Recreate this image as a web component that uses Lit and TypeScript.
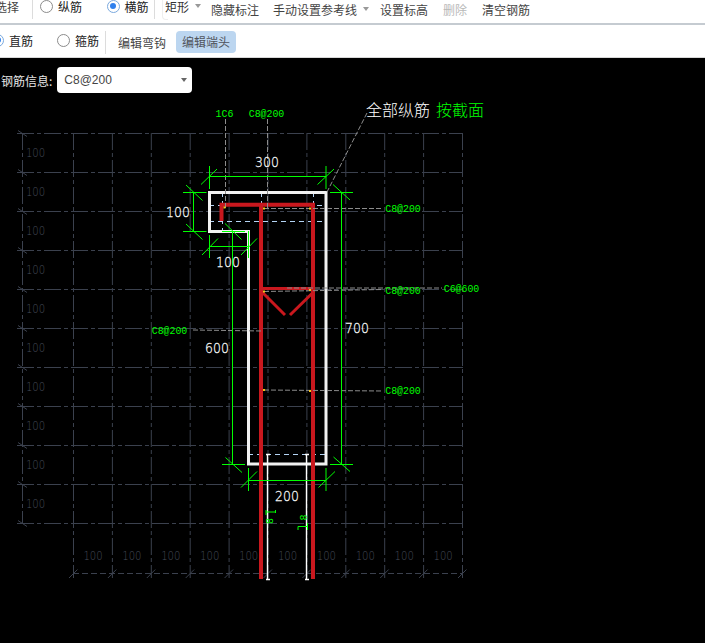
import { LitElement, html, css, svg } from 'lit';
import { customElement } from 'lit/decorators.js';

type Seg = [number, number, number, number];
type Label = [string, number, number];

const GRID_X = Array.from({ length: 11 }, (_, i) => 73.5 + i * 38.9);
const GRID_Y = Array.from({ length: 11 }, (_, i) => 133.5 + i * 39);

// green dimension lines, extension ticks and slashes
const DIM_LINES: Seg[] = [
  [209.5, 176.5, 326, 176.5], [209.5, 166, 209.5, 189], [326, 166, 326, 189],
  [201, 184.5, 217, 169], [317.5, 184.5, 334, 169],
  [193.5, 192.5, 193.5, 231], [183, 192.5, 206.5, 192.5], [183, 231.5, 206.5, 231.5],
  [186, 185, 202.5, 200.5], [186, 224, 202.5, 239.5],
  [209.5, 246.5, 248.5, 246.5], [209.5, 235, 209.5, 258], [248.5, 231, 248.5, 258],
  [202, 255, 218, 238.5], [241, 255, 257, 238.5],
  [232.5, 231.5, 232.5, 464], [222, 231.5, 245, 231.5], [222, 464.5, 245, 464.5],
  [225, 223.5, 241.5, 239.5], [225.5, 457.5, 242, 472.5],
  [341.5, 192.5, 341.5, 464], [330, 192.5, 353, 192.5], [330, 464.5, 353, 464.5],
  [333, 184.5, 350, 200], [333.5, 457, 350, 471.5],
  [248.5, 480.5, 326, 480.5], [248.5, 468, 248.5, 491], [326, 468, 326, 491],
  [241, 487.5, 257, 471.5], [318.5, 487.5, 335, 471.5],
];

const LEADERS: Seg[] = [
  [367, 113, 327, 192], [225.5, 119, 225.5, 208], [267.5, 119, 267.5, 209],
  [264, 208.5, 383, 208.5], [264, 291.5, 383, 289.5], [287, 288, 442, 288],
  [264, 390, 383, 391], [193, 330, 262, 331],
];

const HINTS: Seg[] = [
  [209, 205.5, 326, 205.5], [209, 221.5, 326, 221.5], [222.5, 192, 222.5, 231],
  [261.5, 192, 261.5, 205], [313.5, 192, 313.5, 205], [248, 454.5, 326, 454.5],
];

const DOTS = [[224.5, 207.5], [264, 208.5], [310, 208.5], [264, 291.5], [310, 290], [264, 390], [310, 391]];

const GREEN_LABELS: Label[] = [
  ['1C6', 224.5, 114], ['C8@200', 266.5, 114], ['C8@200', 403, 208.5], ['C8@200', 403, 290.5],
  ['C6@600', 461.5, 288.5], ['C8@200', 169.5, 330.5], ['C8@200', 403, 391],
];

const WHITE_LABELS: Label[] = [
  ['300', 267, 162], ['100', 178, 211.5], ['100', 228, 262], ['600', 217, 348], ['700', 357, 328], ['200', 287, 496],
];

@customElement('app-root')
export class AppRoot extends LitElement {
  static styles = css`
    :host {
      display: block;
      position: relative;
      width: 705px;
      height: 643px;
      overflow: hidden;
      background: #000;
      font-family: "Noto Sans CJK SC", "Liberation Sans", sans-serif;
      font-size: 12px;
      color: #333;
    }
    .bar {
      display: flex;
      align-items: center;
      background: #fff;
      white-space: nowrap;
    }
    .top {
      height: 23px;
      margin-left: -5px;
      padding-bottom: 5px;
      box-sizing: border-box;
    }
    .sub {
      height: 32px;
      margin-left: -9px;
      border-top: 2px solid #c5cbd1;
      border-bottom: 1px solid #d8d8d8;
    }
    .lifted { position: relative; top: -3px; }
    .sep { width: 1px; align-self: flex-start; height: 19px; background: #dcdcdc; }
    .sub .sep { align-self: center; height: 23px; margin-top: 2px; }
    .radio { display: flex; align-items: center; gap: 5px; color: #222; flex: none; }
    .sub .radio { position: relative; top: -1px; }
    .dot {
      width: 13px;
      height: 13px;
      border: 1px solid #8c8c8c;
      border-radius: 50%;
      box-sizing: border-box;
      background: #fff;
      position: relative;
    }
    .dot.on { border-color: #7aa9de; }
    .dot.on::after {
      content: "";
      position: absolute;
      inset: 2.5px;
      border-radius: 50%;
      background: #2f80ed;
    }
    .btn { color: #444; flex: none; }
    .sub .btn { margin-top: 3px; }
    .btn.off { color: #b9b9b9; }
    .caret {
      width: 0;
      height: 0;
      margin-left: 6px;
      border: 3px solid transparent;
      border-top: 4px solid #999;
      border-bottom: 0;
    }
    .pick { display: flex; align-items: center; flex: none; }
    .shape::before {
      content: "";
      position: absolute;
      left: -3px;
      top: -5px;
      bottom: -5px;
      width: 5px;
      border-left: 1px solid #eee;
      border-bottom: 1px solid #eee;
      border-radius: 0 0 0 4px;
    }
    .active {
      background: #bcd6f0;
      color: #50545c;
      border-radius: 4px;
      padding: 3px 6px;
      line-height: 16px;
      margin-top: 2px;
    }
    .form {
      display: flex;
      align-items: center;
      gap: 5px;
      height: 26px;
      margin-top: 9px;
      margin-left: 1px;
      color: #e6e6e6;
    }
    .select {
      display: flex;
      align-items: center;
      justify-content: space-between;
      box-sizing: border-box;
      width: 135px;
      height: 26px;
      padding: 0 5px 0 7px;
      background: #fff;
      border-radius: 4px;
      color: #444;
      font-family: "Liberation Sans", sans-serif;
      font-size: 12px;
    }
    .select .caret { border-top-color: #666; }
    .stage { position: absolute; left: 0; top: 0; pointer-events: none; }
    .stage text { text-anchor: middle; dominant-baseline: central; font-family: "Liberation Mono", monospace; }
    .stage .thin text { font-family: "DejaVu Sans", sans-serif; font-weight: 200; }
    .stage .bright text { stroke: #fff; stroke-width: 0.25px; }
    .stage .note { text-anchor: start; font-family: "Noto Sans CJK SC", sans-serif; font-size: 16px; font-weight: 300; }
  `;

  private line(s: Seg) {
    return svg`<line x1=${s[0]} y1=${s[1]} x2=${s[2]} y2=${s[3]}></line>`;
  }

  // CAD font is tall and narrow, so the text gets squeezed sideways
  private cadText(text: string, x: number, y: number, squeeze: number) {
    return svg`<text transform="translate(${x} ${y}) scale(${squeeze} 1)">${text}</text>`;
  }

  private drawGrid() {
    const ticks: Seg[] = [
      ...GRID_Y.map((y): Seg => [18, y - 3, 27, y + 3]),
      ...GRID_X.map((x): Seg => [x - 4.5, 578, x + 4, 569.5]),
    ];
    return svg`
      <g stroke="#3b414e" stroke-width="1" fill="none" stroke-dasharray="17 3 4 3">
        ${GRID_Y.map(y => this.line([17, y, 463, y]))}
        ${GRID_X.map(x => this.line([x, 133, x, 578]))}
        ${this.line([22.5, 133, 22.5, 524])}
      </g>
      <g stroke="#3b414e" stroke-width="1" fill="none" stroke-dasharray="6 3">
        ${this.line([73, 573.5, 463, 573.5])}
      </g>
      <g stroke="#3b414e" stroke-width="1">${ticks.map(t => this.line(t))}</g>
      <g class="thin" fill="#474d5b" font-size="12">
        ${GRID_Y.slice(0, 10).map(y => this.cadText('100', 35.5, y + 20, 0.84))}
        ${GRID_X.slice(0, 10).map(x => this.cadText('100', x + 19.5, 556.5, 0.84))}
      </g>
    `;
  }

  private drawRebar() {
    return svg`
      <g stroke="#b4d4f5" stroke-width="1" stroke-dasharray="5 4" fill="none">${HINTS.map(s => this.line(s))}</g>
      <path d="M209.5 192.5H326V464H248.5V231.5H209.5Z" fill="none" stroke="#f2f2f2" stroke-width="3" />
      <g stroke="#fff" stroke-width="1.4" fill="none">
        <path d="M267.500 455V579.500M266 454.500H270M266 579.500H270" />
        <path d="M306.500 455V579.500M305 454.500H309M305 579.500H309" />
      </g>
      <path d="M221.500 221V204.700H313V579M261 204.700V579" fill="none" stroke="#c9181e" stroke-width="4" />
      <path d="M261 288.500H313" stroke="#c9181e" stroke-width="3" />
      <path d="M262.500 292.500L285 315M313 292.500L290 315" stroke="#c9181e" stroke-width="3" fill="none" />
      <g stroke="#8c8c8c" stroke-width="1" stroke-dasharray="5 2" fill="none">${LEADERS.map(s => this.line(s))}</g>
      <g fill="#f5c518">${DOTS.map(d => svg`<rect x=${d[0] - 1} y=${d[1] - 1} width="2" height="2"></rect>`)}</g>
    `;
  }

  private drawNotes() {
    return svg`
      <g stroke="#00ff00" stroke-width="1" fill="none">${DIM_LINES.map(s => this.line(s))}</g>
      <g fill="#00ff00" font-size="11">${GREEN_LABELS.map(l => this.cadText(l[0], l[1], l[2], 0.9))}</g>
      <g class="thin bright" fill="#fff" font-size="14.500">${WHITE_LABELS.map(l => this.cadText(l[0], l[1], l[2], 0.86))}</g>
      <text class="note" x="366" y="109" fill="#fff">全部纵筋</text>
      <text class="note" x="436" y="109" fill="#00ff00">按截面</text>
      <g stroke="#00ff00" stroke-width="1" fill="none">
        <path d="M266 510V515M266 512H275.500M275.500 510V513" />
        <path d="M307.500 523V530M307.500 526.500H298M298 526.500V530" />
      </g>
      <text transform="translate(268.5 521) rotate(90)" fill="#00ff00" font-size="10">8</text>
      <text transform="translate(304.5 517.5) rotate(-90)" fill="#00ff00" font-size="10">8</text>
    `;
  }

  render() {
    return html`
      <div class="bar top">
        <span class="btn" style="width: 30px"><span class="lifted">选择</span></span>
        <span class="sep" style="margin: 0 7px"></span>
        <span class="radio lifted" style="width: 66.500px"><span class="dot"></span>纵筋</span>
        <span class="radio lifted" style="width: 47.500px"><span class="dot on"></span>横筋</span>
        <span class="sep" style="margin-right: 10px"></span>
        <span class="pick lifted shape" style="width: 46px">矩形<span class="caret"></span></span>
        <span class="btn" style="width: 62px">隐藏标注</span>
        <span class="pick btn" style="width: 107px">手动设置参考线<span class="caret"></span></span>
        <span class="btn" style="width: 63px">设置标高</span>
        <span class="btn off" style="width: 39px">删除</span>
        <span class="btn">清空钢筋</span>
      </div>
      <div class="bar sub">
        <span class="radio" style="width: 50px"><span class="dot on"></span>直筋</span>
        <span class="radio" style="width: 48px; margin-left: 16px"><span class="dot"></span>箍筋</span>
        <span class="sep" style="margin-right: 12px"></span>
        <span class="btn" style="width: 58px">编辑弯钩</span>
        <span class="active">编辑端头</span>
      </div>
      <div class="form">
        <span>钢筋信息:</span>
        <div class="select"><span>C8@200</span><span class="caret"></span></div>
      </div>
      <svg class="stage" width="705" height="643" viewBox="0 0 705 643">
        ${this.drawGrid()}
        ${this.drawRebar()}
        ${this.drawNotes()}
      </svg>
    `;
  }
}
